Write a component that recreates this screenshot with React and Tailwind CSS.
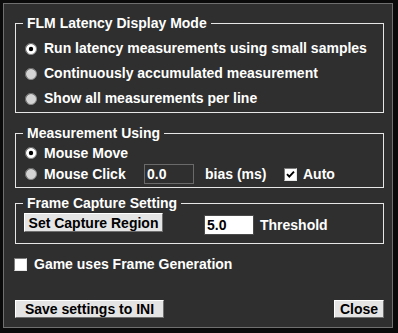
import React from 'react'

const Radio = ({ checked }) => (
  <svg width="12" height="12" viewBox="0 0 12 12" className="shrink-0">
    <circle cx="6" cy="6" r="5.5" fill={checked ? '#ffffff' : '#d4d4d4'} stroke="#8c8c8c" />
    <path d="M2.2 9.8A5 5 0 0 1 2.2 2.2A5 5 0 0 1 9.8 2.2" fill="none" stroke="#6a6a6a" strokeWidth="1" />
    {checked && <circle cx="6" cy="6" r="2.2" fill="#000" />}
  </svg>
)

const Check = ({ checked }) => (
  <span className="flex h-[13px] w-[13px] shrink-0 items-center justify-center border-t border-l border-t-[#7d7d7d] border-l-[#7d7d7d] border-b border-r border-b-[#e8e8e8] border-r-[#e8e8e8] bg-white">
    {checked && (
      <svg width="9" height="9" viewBox="0 0 9 9">
        <path d="M1 4.2L3.3 6.6L8 1.6" fill="none" stroke="#000" strokeWidth="1.9" />
      </svg>
    )}
  </span>
)

const Button = ({ className, children }) => (
  <button
    type="button"
    className={
      'flex items-center justify-center border border-t-white border-l-white border-b-[#6f6f6f] border-r-[#6f6f6f] bg-[#e4e4e4] leading-none text-black ' +
      className
    }
  >
    {children}
  </button>
)

const Group = ({ title, className, children }) => (
  <fieldset className={'w-[369px] border border-[#e6e6e6] ' + className}>
    <legend className="ml-[7px] px-[4px] leading-[18px]">{title}</legend>
    {children}
  </fieldset>
)

const RadioRow = ({ checked, label, className }) => (
  <div className={'flex items-center gap-[7px] pl-[9px] ' + className}>
    <Radio checked={checked} />
    <span>{label}</span>
  </div>
)

export default function App() {
  return (
    <div className="h-[333px] w-[398px] bg-[#0a0a0a] pl-[3px] pt-[3px] font-['Liberation_Sans',Arial,sans-serif] text-[14px] font-bold text-white">
      <div className="flex h-[325px] w-[390px] flex-col border border-[#6f6f6f] bg-[#2f2f2f] pl-[11px] pr-[8px] pt-[10px]">
        <Group title="FLM Latency Display Mode" className="pb-[1px] pt-[4px]">
          <RadioRow checked label="Run latency measurements using small samples" className="h-[25px]" />
          <RadioRow label="Continuously accumulated measurement" className="h-[25px]" />
          <RadioRow label="Show all measurements per line" className="h-[25px]" />
        </Group>

        <Group title="Measurement Using" className="mt-[11px] pb-[2px] pt-[1px]">
          <RadioRow checked label="Mouse Move" className="h-[20px]" />
          <div className="flex h-[22px] items-center pl-[9px]">
            <div className="flex w-[119px] items-center gap-[7px]">
              <Radio />
              <span>Mouse Click</span>
            </div>
            <div className="flex h-[20px] w-[50px] items-center border border-[#6a6a6a] bg-[#2f2f2f] pl-[2px]">
              0.0
            </div>
            <span className="ml-[11px] w-[79px]">bias (ms)</span>
            <Check checked />
            <span className="ml-[6px]">Auto</span>
          </div>
        </Group>

        <Group title="Frame Capture Setting" className="mt-[6px] pb-[8px] pt-[1px]">
          <div className="flex h-[22px] items-start pl-[8px]">
            <Button className="h-[19px] w-[139px]">Set Capture Region</Button>
            <div className="ml-[41px] mt-[2px] flex h-[20px] w-[50px] items-center border border-[#4a4a4a] bg-white pl-[2px] text-black">
              5.0
            </div>
            <span className="ml-[6px] mt-[2px] leading-[20px]">Threshold</span>
          </div>
        </Group>

        <div className="-ml-[1px] mt-[10px] flex h-[20px] items-center gap-[7px]">
          <Check />
          <span>Game uses Frame Generation</span>
        </div>

        <div className="mt-auto flex justify-between pb-[9px]">
          <Button className="h-[18px] w-[149px]">Save settings to INI</Button>
          <Button className="h-[18px] w-[50px]">Close</Button>
        </div>
      </div>
    </div>
  )
}
